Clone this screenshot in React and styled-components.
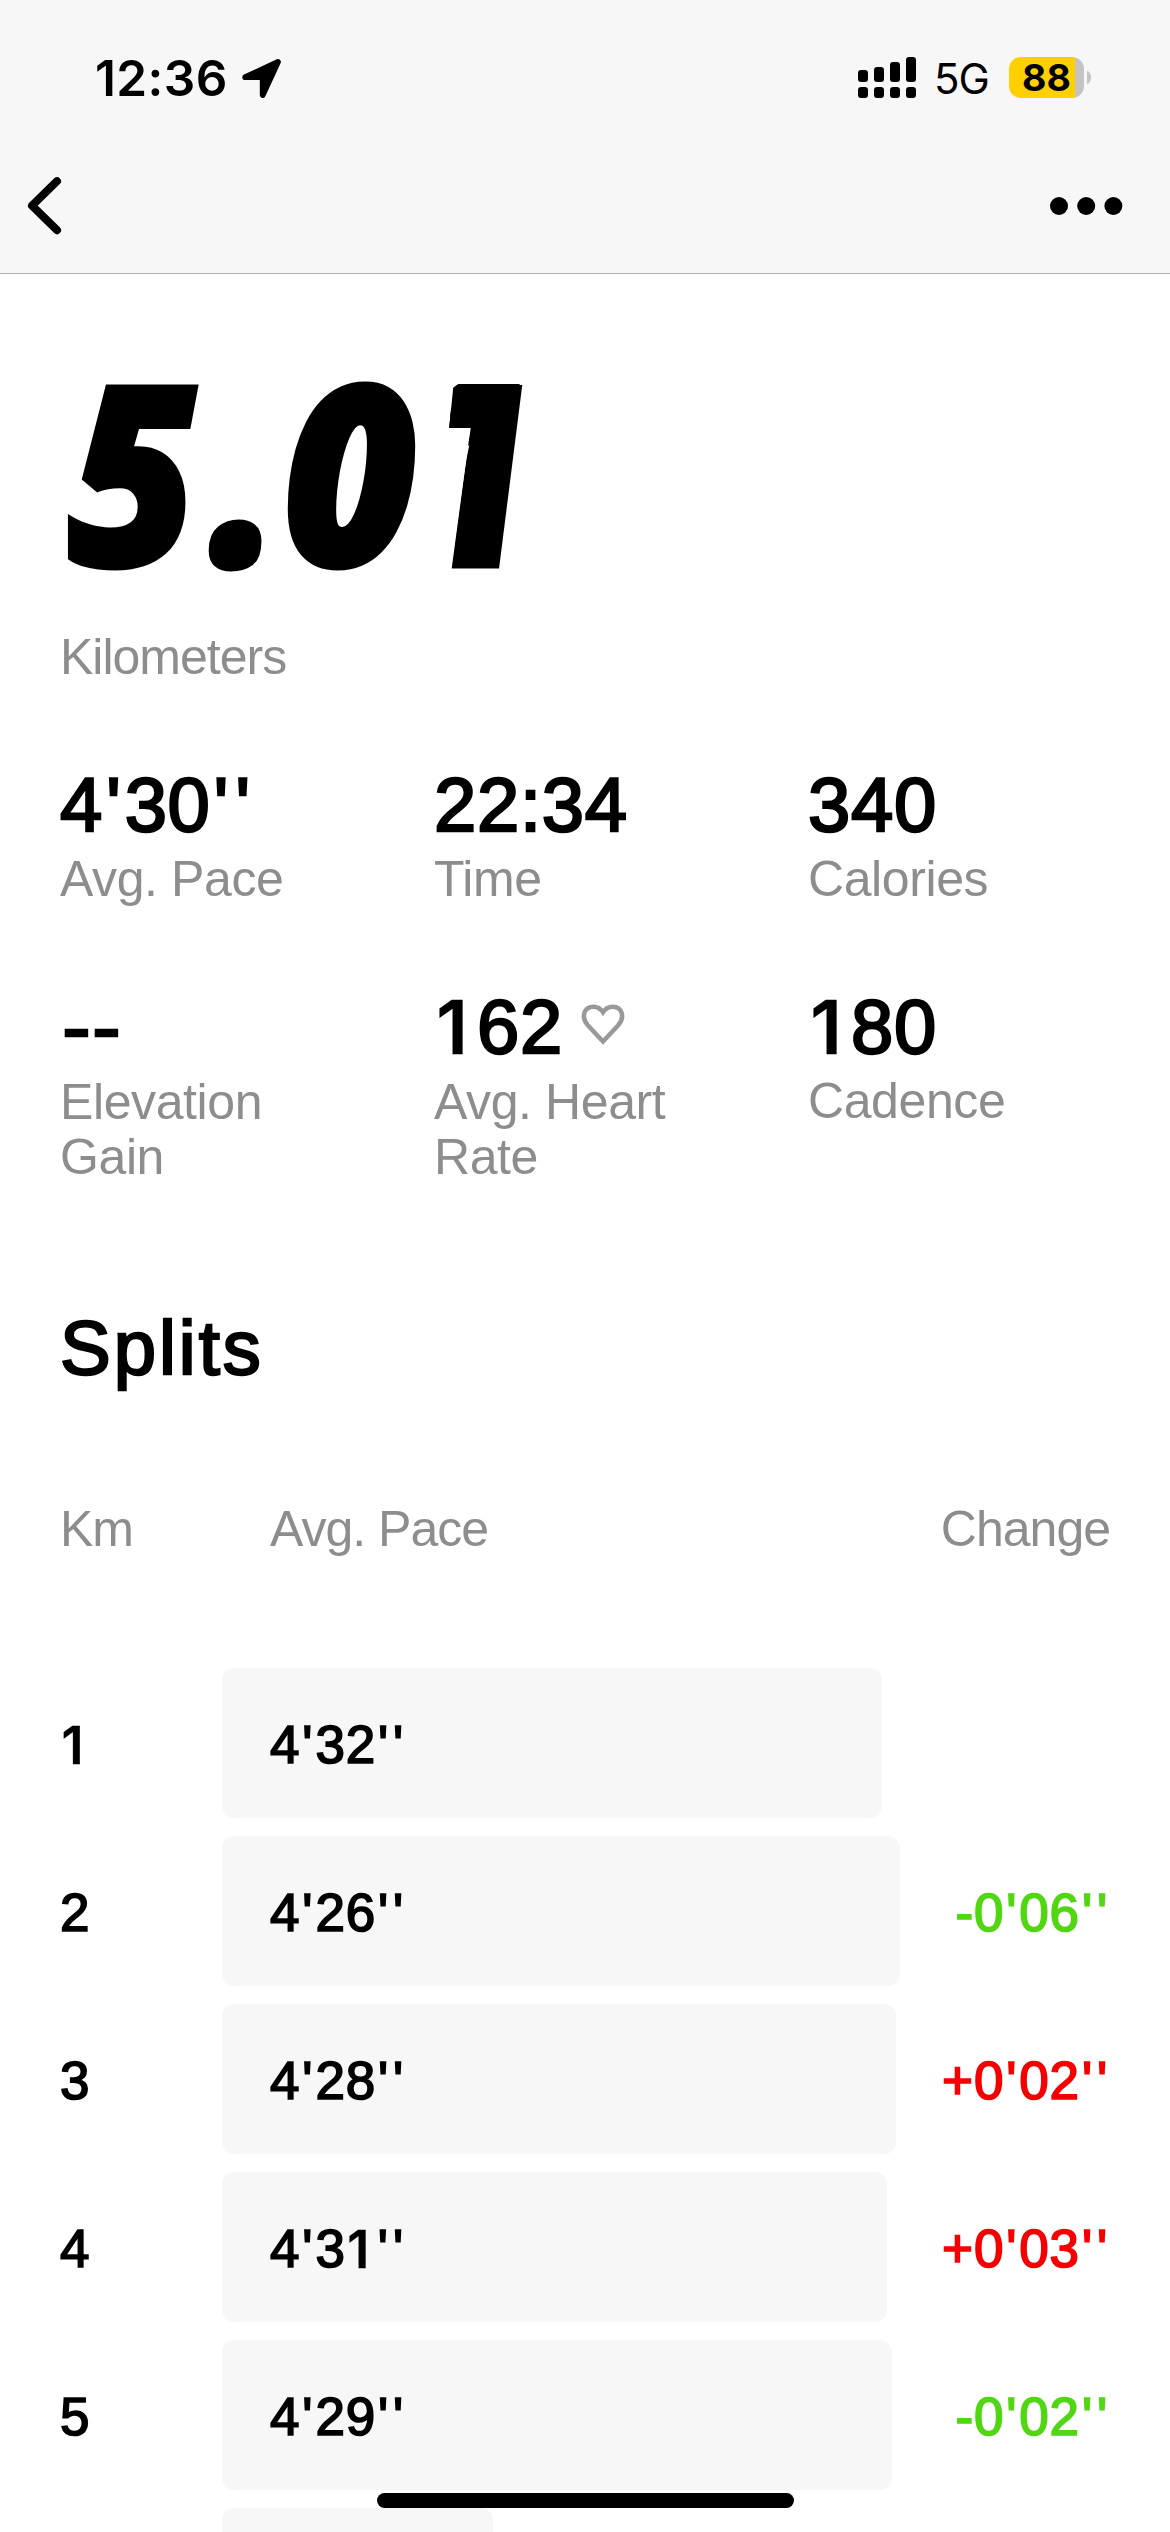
import React from "react";
import styled, { createGlobalStyle } from "styled-components";

const GlobalStyle = createGlobalStyle`
  * { box-sizing: border-box; }
  body {
    margin: 0;
    background: #fff;
    color: #000;
    font-family: "Liberation Sans", Arial, sans-serif;
    overflow: hidden;
  }
`;

const Screen = styled.div`
  position: relative;
  display: flex;
  flex-direction: column;
  width: 1170px;
  height: 2532px;
  overflow: hidden;
  background: #fff;
`;

const Header = styled.header`
  display: flex;
  flex-direction: column;
  flex: none;
  height: 274px;
  background: #f7f7f7;
  border-bottom: 1px solid #b0b0b0;
`;

const StatusBar = styled.div`
  display: flex;
  align-items: center;
  justify-content: space-between;
  height: 155px;
  padding: 0 79px 0 95px;
  font-family: Inter, sans-serif;
`;

const StatusGroup = styled.div`
  display: flex;
  align-items: center;
  svg { display: block; }
`;

const Clock = styled.span`
  width: 147px;
  font-size: 49.5px;
  line-height: 60px;
  font-weight: 600;
  letter-spacing: 0.4px;
  white-space: nowrap;
`;

const Network = styled.span`
  width: 75px;
  margin-left: 18px;
  font-size: 42px;
  line-height: 50px;
  margin-top: 3px;
  letter-spacing: -1px;
`;

const Battery = styled.div`
  display: flex;
  align-items: center;
  justify-content: center;
  width: 75px;
  height: 41px;
  border-radius: 12px;
  background: linear-gradient(90deg, #ffcf00 66px, #c4c4c4 66px);
  font-size: 37.5px;
  line-height: 41px;
  font-weight: 700;
`;

const BatteryCap = styled.div`
  width: 4px;
  height: 13px;
  margin-left: 3px;
  border-radius: 0 4px 4px 0 / 0 6.5px 6.5px 0;
  background: #c4c4c4;
`;

const NavBar = styled.nav`
  display: flex;
  align-items: center;
  justify-content: space-between;
  height: 102px;
  padding: 0 46px 0 26px;
`;

const IconButton = styled.button`
  display: flex;
  padding: 0;
  border: 0;
  background: none;
  color: #000;
`;

const Content = styled.main`
  display: flex;
  flex-direction: column;
  padding: 95px 60px 0;
`;

const Distance = styled.div`
  display: flex;
  height: 200px;
  margin: 0 0 61px 8px;
  font-family: "Open Sans", sans-serif;
  font-size: 250px;
  line-height: 200px;
  font-weight: 800;
  font-style: italic;
  -webkit-text-stroke: 5px #000;
`;

const Digit = styled.span`
  width: ${(p) => p.$width}px;
  white-space: nowrap;
  transform: scaleX(${(p) => p.$stretch || 1}) skewX(${(p) => p.$skew || 0}deg);
  transform-origin: 0 198px;
`;

/* The numeral one gets a short, squared flag. */
const SquaredOne = styled(Digit)`
  text-shadow: 5px -25px 0 #000;
  clip-path: polygon(59px 15px, 51px 59px, 75px 59px, 69px 85px, 42px 205px, 200px 205px, 200px 15px);
`;

const Label = styled.div`
  color: #8d8d8d;
  font-size: 50px;
  line-height: 55px;
  letter-spacing: ${(p) => (p.$tight ? "-1px" : "-0.4px")};
`;

const Stats = styled.section`
  display: grid;
  grid-template-columns: repeat(3, 374px);
  row-gap: 74px;
  margin-top: 74px;
`;

const Stat = styled.div`
  display: flex;
  flex-direction: column;
  gap: ${(p) => (p.$wraps ? 3 : 2)}px;
  width: 290px;
`;

const Value = styled.div`
  display: flex;
  align-items: center;
  height: 91px;
  font-size: 76px;
  line-height: 91px;
  letter-spacing: 0.7px;
  -webkit-text-stroke: 2.4px #000;
  white-space: nowrap;
  svg { margin: 0 0 4px 18px; }
`;

const SectionTitle = styled.h2`
  margin: 117px 0 0;
  font-size: 76px;
  line-height: 91px;
  font-weight: 400;
  letter-spacing: 3px;
  -webkit-text-stroke: 2.4px #000;
`;

const TableHead = styled.div`
  display: grid;
  grid-template-columns: 210px 1fr auto;
  margin: 109px 0 111px;
`;

const Rows = styled.div`
  display: flex;
  flex-direction: column;
  gap: 18px;
`;

const Row = styled.div`
  display: grid;
  grid-template-columns: 162px 1fr auto;
  align-items: center;
  height: 150px;
  font-size: 53px;
  line-height: 60px;
  letter-spacing: 0.8px;
  -webkit-text-stroke: 1.7px currentColor;
`;

const Cell = styled.span`
  display: flex;
  padding-top: 4px;
  color: ${(p) => p.$color || "#000"};
`;

const Bar = styled.div`
  display: flex;
  align-items: center;
  height: 150px;
  padding-left: 48px;
  border-radius: 12px;
  background: #f7f7f7;
`;

const Prime = styled.span`
  display: inline-block;
  width: 0.285em;
  text-align: center;
`;

const One = styled.span`
  display: inline-block;
  width: 0.576em;
  padding-left: 0.03em;
  font-family: Inter, sans-serif;
  font-size: 0.985em;
  font-weight: 600;
  letter-spacing: 0;
  -webkit-text-stroke: 0.3px currentColor;
`;

const Dash = styled.span`
  display: inline-block;
  width: 30px;
  padding-left: 2px;
  transform: scaleX(1.12);
  transform-origin: 0 50%;
`;

const HomeIndicator = styled.div`
  position: absolute;
  left: 377px;
  bottom: 24px;
  width: 417px;
  height: 15px;
  border-radius: 8px;
  background: #000;
`;

const figures = (text) =>
  text.split("").map((ch, i) => {
    if (ch === "'") return <Prime key={i}>{ch}</Prime>;
    if (ch === "1") return <One key={i}>{ch}</One>;
    return <span key={i}>{ch}</span>;
  });

const LocationArrow = () => (
  <svg width="41" height="41" viewBox="0 0 41 41">
    <path
      d="M3.200 20.200 36 4.900 20.700 38V20.200Z"
      fill="#000"
      stroke="#000"
      strokeWidth="5.800"
      strokeLinejoin="round"
    />
  </svg>
);

const SIGNAL = [70, 67, 62, 57];

const Signal = () => (
  <svg width="58" height="41" viewBox="0 57 58 41">
    {SIGNAL.map((top, i) => (
      <g key={top}>
        <rect x={i * 16} y={top} width="10" height={82 - top} rx="3.2" />
        <rect x={i * 16} y="87" width="10" height="11" rx="3.2" />
      </g>
    ))}
  </svg>
);

const Chevron = () => (
  <svg width="38" height="60" viewBox="26 177 38 60">
    <path
      d="M57 182.200 32 206.700 57 231.200"
      fill="none"
      stroke="#000"
      strokeWidth="8"
      strokeLinecap="round"
      strokeLinejoin="round"
    />
  </svg>
);

const More = () => (
  <svg width="76" height="20" viewBox="0 0 76 20">
    <circle cx="11" cy="10" r="9" />
    <circle cx="38.200" cy="10" r="9" />
    <circle cx="65.400" cy="10" r="9" />
  </svg>
);

const Heart = () => (
  <svg width="44" height="42" viewBox="0 0 44 42">
    <path
      d="M22 37.500 7 21.500C-0.500 13 3 2.700 12.500 2.700C17 2.700 19.500 4.500 22 8.200C24.500 4.500 27 2.700 31.500 2.700C41 2.700 44.500 13 37 21.500Z"
      fill="none"
      stroke="#999"
      strokeWidth="4.500"
    />
  </svg>
);

const STATS = [
  { value: "4'30''", label: "Avg. Pace" },
  { value: "22:34", label: "Time" },
  { value: "340", label: "Calories" },
  { value: "--", label: "Elevation Gain", wraps: true },
  { value: "162", label: "Avg. Heart Rate", wraps: true, icon: <Heart /> },
  { value: "180", label: "Cadence" },
];

const GREEN = "#52d613";
const RED = "#f50000";

const SPLITS = [
  { km: "1", pace: "4'32''", width: 660 },
  { km: "2", pace: "4'26''", width: 678, change: "-0'06''", color: GREEN },
  { km: "3", pace: "4'28''", width: 674, change: "+0'02''", color: RED },
  { km: "4", pace: "4'31''", width: 665, change: "+0'03''", color: RED },
  { km: "5", pace: "4'29''", width: 670, change: "-0'02''", color: GREEN },
  { km: "", pace: "", width: 271 },
];

export default function App() {
  return (
    <Screen>
      <GlobalStyle />
      <Header>
        <StatusBar>
          <StatusGroup>
            <Clock>12:36</Clock>
            <LocationArrow />
          </StatusGroup>
          <StatusGroup>
            <Signal />
            <Network>5G</Network>
            <Battery>88</Battery>
            <BatteryCap />
          </StatusGroup>
        </StatusBar>
        <NavBar>
          <IconButton aria-label="Back"><Chevron /></IconButton>
          <IconButton aria-label="More"><More /></IconButton>
        </NavBar>
      </Header>
      <Content>
        <Distance>
          <Digit $width={143} $stretch={0.89}>5</Digit>
          <Digit $width={72} $stretch={0.93}>.</Digit>
          <Digit $width={129} $stretch={0.92}>0</Digit>
          <SquaredOne $width={145} $stretch={0.9} $skew={4}>1</SquaredOne>
        </Distance>
        <Label $tight>Kilometers</Label>
        <Stats>
          {STATS.map((s) => (
            <Stat key={s.label} $wraps={s.wraps}>
              <Value>
                {s.value === "--"
                  ? [0, 1].map((i) => <Dash key={i}>-</Dash>)
                  : figures(s.value)}
                {s.icon}
              </Value>
              <Label>{s.label}</Label>
            </Stat>
          ))}
        </Stats>
        <SectionTitle>Splits</SectionTitle>
        <TableHead>
          <Label $tight>Km</Label>
          <Label $tight>Avg. Pace</Label>
          <Label $tight>Change</Label>
        </TableHead>
        <Rows>
          {SPLITS.map((s) => (
            <Row key={s.km}>
              <Cell>{figures(s.km)}</Cell>
              <Bar style={{ width: s.width }}>
                <Cell>{figures(s.pace)}</Cell>
              </Bar>
              <Cell $color={s.color}>{s.change && figures(s.change)}</Cell>
            </Row>
          ))}
        </Rows>
      </Content>
      <HomeIndicator />
    </Screen>
  );
}
